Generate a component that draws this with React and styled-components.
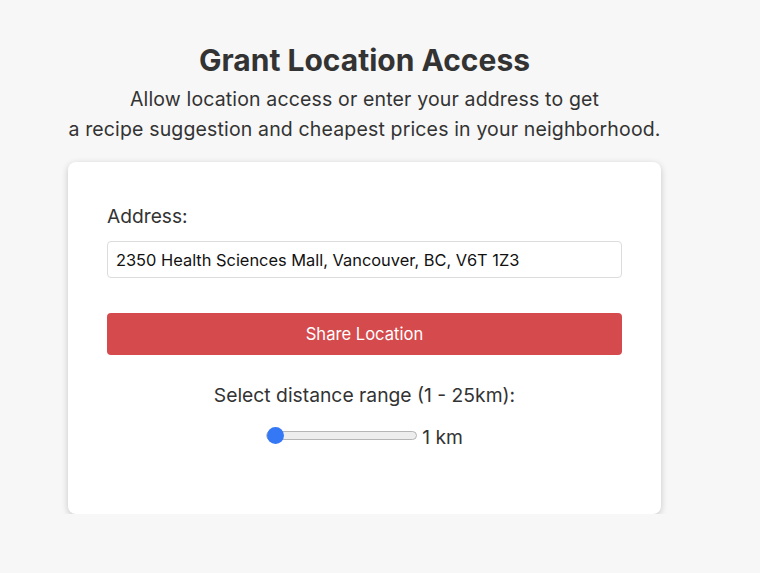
import React, { useState } from "react";
import styled, { createGlobalStyle } from "styled-components";

const Global = createGlobalStyle`
  html, body { margin: 0; padding: 0; background: #f7f7f7; }
  body { font-family: Inter, "Open Sans", sans-serif; color: #333; }
`;

const Page = styled.div`
  width: 729px;
  display: flex;
  flex-direction: column;
  align-items: center;
  padding-top: 43px;
`;

const Title = styled.h1`
  margin: 0;
  font-size: 30px;
  line-height: 34px;
  font-weight: 700;
  color: #333;
`;

const Subtitle = styled.p`
  margin: 7px 0 0;
  font-size: 19.5px;
  letter-spacing: 0.15px;
  line-height: 30px;
  text-align: center;
  color: #333;
  white-space: nowrap;
`;

const Card = styled.div`
  margin-top: 18px;
  width: 515px;
  padding: 43px 39px 68px;
  background: #fff;
  border-radius: 8px;
  box-shadow: 0 2px 7px rgba(0, 0, 0, 0.2);
  display: flex;
  flex-direction: column;
`;

const Label = styled.label`
  font-size: 19.2px;
  line-height: 22px;
  color: #333;
`;

const Input = styled.input`
  margin-top: 14px;
  box-sizing: border-box;
  width: 100%;
  height: 37px;
  padding: 0 8px;
  border: 1px solid #dcdcdc;
  border-radius: 4px;
  font-family: inherit;
  font-size: 16.4px;
  color: #111;
  outline: none;
`;

const Button = styled.button`
  margin-top: 35px;
  height: 42px;
  width: 100%;
  border: none;
  border-radius: 4px;
  background: #d44a4d;
  color: #fff;
  font-family: inherit;
  font-size: 16.6px;
`;

const RangeLabel = styled.div`
  margin-top: 29px;
  text-align: center;
  font-size: 19.3px;
  line-height: 22px;
  color: #333;
`;

const SliderRow = styled.div`
  margin-top: 18px;
  display: flex;
  justify-content: center;
  align-items: center;
  gap: 5px;
  height: 22px;
`;

const Range = styled.input`
  -webkit-appearance: none;
  appearance: none;
  width: 151px;
  height: 9px;
  margin: 0;
  background: #ededed;
  border: 1px solid #b5b5b5;
  border-radius: 5px;
  box-sizing: border-box;
  outline: none;
  &::-webkit-slider-thumb {
    -webkit-appearance: none;
    width: 17px;
    height: 17px;
    border-radius: 50%;
    background: #3478f6;
    border: none;
  }
`;

const RangeValue = styled.span`
  font-size: 19.3px;
  line-height: 22px;
  color: #333;
  margin-top: 4px;
`;

export default function App() {
  const [dist, setDist] = useState(1);
  return (
    <>
      <Global />
      <Page>
        <Title>Grant Location Access</Title>
        <Subtitle>
          Allow location access or enter your address to get
          <br />
          a recipe suggestion and cheapest prices in your neighborhood.
        </Subtitle>
        <Card>
          <Label>Address:</Label>
          <Input defaultValue="2350 Health Sciences Mall, Vancouver, BC, V6T 1Z3" />
          <Button>Share Location</Button>
          <RangeLabel>Select distance range (1 - 25km):</RangeLabel>
          <SliderRow>
            <Range
              type="range"
              min={1}
              max={25}
              value={dist}
              onChange={(e) => setDist(Number(e.target.value))}
            />
            <RangeValue>{dist} km</RangeValue>
          </SliderRow>
        </Card>
      </Page>
    </>
  );
}
